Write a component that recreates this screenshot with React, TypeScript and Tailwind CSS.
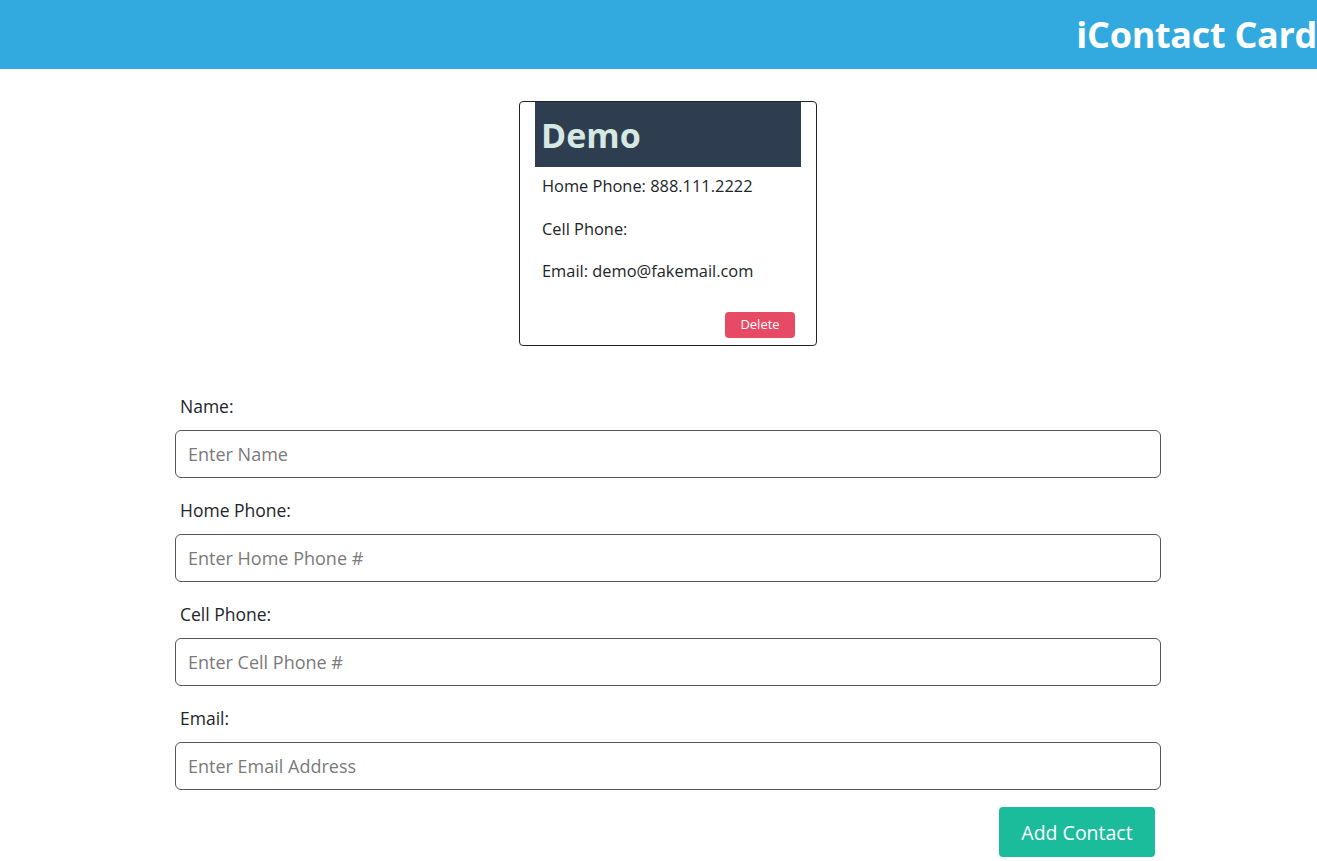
import React from "react";

const font = { fontFamily: '"Open Sans", "Noto Sans", sans-serif' };

function Field({ label, placeholder }: { label: string; placeholder: string }) {
  return (
    <div className="flex flex-col">
      <label className="pl-[5px] text-[17.5px] leading-[24px] text-[#212529]">{label}</label>
      <input
        className="mt-[12px] h-[48px] w-full rounded-[6px] border border-[#555] px-[12px] text-[18px] text-[#212529] outline-none placeholder:text-[#7a7a7a]"
        placeholder={placeholder}
      />
    </div>
  );
}

export default function App() {
  return (
    <div className="min-h-screen bg-white" style={font}>
      <header className="flex h-[69px] items-center justify-end overflow-hidden bg-[#33aadf]">
        <h1 className="whitespace-nowrap pt-[1px] text-[36px] font-bold leading-none tracking-[-0.3px] text-white">iContact Card</h1>
      </header>
      <main className="pl-[19px]">
        <div className="mx-auto mt-[32px] flex w-[298px] flex-col rounded-[4px] border border-[#222] px-[15px] pb-[7px]">
          <div className="flex h-[65px] items-center bg-[#2e3d50] pl-[6px]">
            <span className="text-[34px] font-bold leading-none text-[#d6e8e2]">Demo</span>
          </div>
          <div className="mt-[6px] flex flex-col gap-[16px] pl-[7px] text-[16.4px] leading-[26.5px] text-[#212529]">
            <p>Home Phone: 888.111.2222</p>
            <p>Cell Phone:</p>
            <p>Email: demo@fakemail.com</p>
          </div>
          <div className="mt-[27px] flex justify-end pr-[6px]">
            <button className="h-[26px] w-[70px] rounded-[4px] bg-[#e64a64] text-[13px] text-white">Delete</button>
          </div>
        </div>
        <div className="mx-auto mt-[48px] flex w-[986px] flex-col gap-[20.33px]">
          <Field label="Name:" placeholder="Enter Name" />
          <Field label="Home Phone:" placeholder="Enter Home Phone #" />
          <Field label="Cell Phone:" placeholder="Enter Cell Phone #" />
          <Field label="Email:" placeholder="Enter Email Address" />
        </div>
        <div className="mx-auto mt-[17px] flex w-[986px] justify-end pr-[6px]">
          <button className="h-[50px] w-[156px] rounded-[4px] bg-[#1abc9c] text-[19.5px] text-white">Add Contact</button>
        </div>
      </main>
    </div>
  );
}
